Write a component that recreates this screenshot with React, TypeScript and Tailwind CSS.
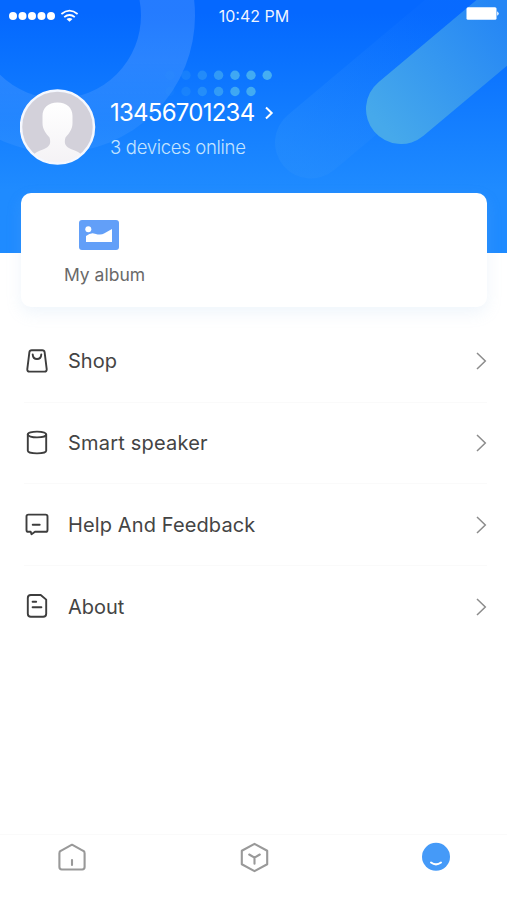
import type { ReactNode } from "react";

const menuItems = [
  { name: "Shop", icon: <ShopIcon />, tracking: "tracking-[0px]" },
  { name: "Smart speaker", icon: <SpeakerIcon />, tracking: "tracking-[0.2px]" },
  { name: "Help And Feedback", icon: <FeedbackIcon />, tracking: "tracking-[0.12px]" },
  { name: "About", icon: <AboutIcon />, tracking: "tracking-[0px]" },
];

const dots = [
  { x: 170, opacity: 0.06 },
  { x: 186, opacity: 0.2 },
  { x: 202.3, opacity: 0.4 },
  { x: 218.6, opacity: 0.65 },
  { x: 235, opacity: 0.9 },
  { x: 251, opacity: 0.95 },
  { x: 267.2, opacity: 1 },
];

function MenuSvg({ children }: { children: ReactNode }) {
  return (
    <svg
      className="w-[26px] h-[26px] shrink-0"
      viewBox="0 0 26 26"
      fill="none"
      stroke="#3d3d3d"
      strokeWidth="1.9"
      strokeLinecap="round"
      strokeLinejoin="round"
    >
      {children}
    </svg>
  );
}

function ShopIcon() {
  return (
    <MenuSvg>
      <path d="M7.7 2.2h10.6q2 0 2.3 2l2.1 17q.2 2.4-2.2 2.4h-15q-2.4 0-2.200-2.400l2.100-17q.3-2 2.300-2Z" />
      <path d="M8.7 6.400c.4 6.200 8.200 6.200 8.600 0" />
    </MenuSvg>
  );
}

function SpeakerIcon() {
  return (
    <MenuSvg>
      <path d="M3.8 4.500v16.300c0 1.500 4.200 2.600 9.200 2.600s9.200-1.100 9.200-2.600V4.500" />
      <ellipse cx="13" cy="4.500" rx="9.200" ry="2.900" />
    </MenuSvg>
  );
}

function FeedbackIcon() {
  return (
    <MenuSvg>
      <path d="M4.400 2.600h17.200q1.900 0 1.900 1.900v13.400q0 1.900-1.900 1.900H11l-3.500 2.500-.8-2.500H4.400q-1.900 0-1.900-1.900V4.500q0-1.900 1.900-1.900Z" />
      <path d="M8.700 12.800h7" />
    </MenuSvg>
  );
}

function AboutIcon() {
  return (
    <MenuSvg>
      <path d="M6.800.95h9.900l5.500 4.700v14.100q0 3-3 3H6.800q-3 0-3-3V3.950q0-3 3-3Z" />
      <path d="M8.600 7.800h3.600M8.600 13.200h8.800" />
    </MenuSvg>
  );
}

function HeaderPattern() {
  return (
    <svg className="absolute inset-0 w-full h-full" viewBox="0 0 507 253" fill="none">
      <defs>
        <linearGradient id="pill" gradientUnits="userSpaceOnUse" x1="385" y1="130" x2="507" y2="20">
          <stop stopColor="#46a9eb" />
          <stop offset="1" stopColor="#2586f5" />
        </linearGradient>
        <linearGradient id="pillFaint" gradientUnits="userSpaceOnUse" x1="300" y1="160" x2="440" y2="35">
          <stop stopColor="#2b90fc" stopOpacity="0.4" />
          <stop offset="1" stopColor="#2482ff" stopOpacity="0.08" />
        </linearGradient>
        <linearGradient id="ring" x1="0" y1="0" x2="0" y2="1">
          <stop stopColor="#fff" stopOpacity="0.13" />
          <stop offset="0.7" stopColor="#fff" stopOpacity="0.13" />
          <stop offset="1" stopColor="#fff" stopOpacity="0.06" />
        </linearGradient>
      </defs>
      <circle cx="58" cy="15.5" r="110" stroke="url(#ring)" strokeWidth="54" />
      <path d="M311 142.500 511 -25.300" stroke="url(#pillFaint)" strokeWidth="72" strokeLinecap="round" />
      <path d="M401 109 601 -58.800" stroke="url(#pill)" strokeWidth="70" strokeLinecap="round" />
      {dots.map((dot) => (
        <g key={dot.x} fill="#45aef2" opacity={dot.opacity}>
          <circle cx={dot.x} cy="75.3" r="4.7" />
          {dot.x < 260 && <circle cx={dot.x} cy="91.5" r="4.7" />}
        </g>
      ))}
    </svg>
  );
}

function StatusBar() {
  return (
    <div className="flex h-8 items-center justify-between pl-[9px] pr-[8px]">
      <svg className="w-[72px] h-5" viewBox="0 0 72 20" fill="none">
        <g fill="#fff">
          <circle cx="4" cy="10" r="4" />
          <circle cx="13.5" cy="10" r="4" />
          <circle cx="23" cy="10" r="4" />
          <circle cx="32.5" cy="10" r="4" />
          <circle cx="42" cy="10" r="4" />
          <path d="M60.5 15.800l-3-2.700q3-2.200 6 0Z" />
        </g>
        <path d="M52.400 8q8.100-6.800 16.200 0M55.200 11.100q5.300-4.300 10.600 0" stroke="#fff" strokeWidth="1.8" />
      </svg>
      <span className="text-[16px] leading-5 text-white/95">10:42 PM</span>
      <svg className="w-[72px] h-5" viewBox="0 0 72 20" fill="#fff">
        <rect x="39.5" y="1.3" width="30" height="12.5" rx="1.5" />
        <path d="M70.200 5.200q3 2.300 0 4.600Z" />
      </svg>
    </div>
  );
}

function Avatar() {
  return (
    <svg className="w-[76px] h-[76px] shrink-0" viewBox="0 0 76 76">
      <defs>
        <clipPath id="avatarClip">
          <circle cx="37.5" cy="38" r="36" />
        </clipPath>
        <linearGradient id="person" x1="0" y1="0" x2="0" y2="1">
          <stop stopColor="#fff" />
          <stop offset="1" stopColor="#f4f2f5" />
        </linearGradient>
      </defs>
      <circle cx="37.5" cy="38" r="36" fill="#d3d1da" />
      <path
        clipPath="url(#avatarClip)"
        fill="url(#person)"
        d="M37.5 13.500C28 13.500 22.500 19 22.500 27V34C22.500 40 25.500 44 29.500 48.500C31.500 55 29 58 23 60.500C18 62.500 15 63.500 14 66V76H61V66C60 63.500 57 62.500 52 60.500C46 58 43.500 55 45.500 48.500C49.500 44 52.500 40 52.500 34V27C52.500 19 47 13.500 37.500 13.500Z"
      />
      <circle cx="37.5" cy="38" r="36.5" fill="none" stroke="#f5f8ff" strokeWidth="2.5" />
    </svg>
  );
}

export default function App() {
  return (
    <div className="flex h-[900px] w-[507px] flex-col overflow-hidden bg-white font-['Inter','Liberation_Sans',sans-serif]">
      {/* Header */}
      <header className="relative h-[253px] shrink-0 bg-linear-to-b from-[#0568ff] from-5% to-[#1f8bff] to-75%">
        <HeaderPattern />
        <div className="relative">
          <StatusBar />
          <div className="flex items-center gap-[14px] pl-[20px] pt-[57px]">
            <Avatar />
            <div className="pt-[3px]">
              <div className="flex items-center gap-[10px] text-white">
                <span className="text-[24px] leading-[30px] tracking-[-0.75px]">13456701234</span>
                <svg className="w-[10px] h-[14px]" viewBox="0 0 10 14" fill="none" stroke="currentColor" strokeWidth="2">
                  <path d="M2 1.500 7.700 7 2 12.500" />
                </svg>
              </div>
              <p className="mt-[7px] text-[18.5px] leading-[24px] tracking-[-0.3px] font-light text-[#c4e4ff]">3 devices online</p>
            </div>
          </div>
        </div>
      </header>

      {/* Album card */}
      <section className="relative -mt-[60px] ml-[21px] mr-[20px] h-[114px] shrink-0 rounded-[10px] bg-white pt-[27px] pl-[43px] shadow-[0_6px_16px_rgba(150,190,225,0.15)]">
        <div className="flex w-[81px] flex-col items-center">
          <svg className="ml-[-12px] w-10 h-[30px]" viewBox="0 0 40 30">
            <rect width="40" height="30" rx="3" fill="#629ff8" />
            <circle cx="9.3" cy="9.2" r="3" fill="#fff" />
            <path d="M7 16q5-4 9-2.300 6 1.800 9-.2l8-4.500v13H7Z" fill="#fff" />
          </svg>
          <span className="mt-[13px] whitespace-nowrap text-[17.5px] leading-6 text-[#696969]">My album</span>
        </div>
      </section>

      {/* Menu */}
      <nav className="mt-[14px] flex-1 pl-[24px] pr-[20px]">
        {menuItems.map((item, i) => (
          <div
            key={item.name}
            className={`flex h-[81.7px] items-center border-[#fafafa] ${i < 3 ? "border-b" : ""}`}
          >
            {item.icon}
            <span className={`ml-[18px] flex-1 text-[20px] text-[#444] ${item.tracking}`}>{item.name}</span>
            <svg className="w-3 h-[18px]" viewBox="0 0 12 18" fill="none" stroke="#8c8c8c" strokeWidth="1.5">
              <path d="M2 1 10.300 9 2 17" />
            </svg>
          </div>
        ))}
      </nav>

      {/* Tab bar */}
      <footer className="flex h-[66px] shrink-0 items-start justify-between border-t border-[#fafafa] pl-[57px] pr-[56px] pt-[7px]">
        <svg className="w-[30px] h-[32px]" viewBox="0 0 30 32" fill="none" stroke="#999" strokeWidth="2.1" strokeLinejoin="round" strokeLinecap="round">
          <path d="M15 2.700 3.800 8.800q-1.400.7-1.400 2.400v13.900q0 2.400 2.400 2.400h20.400q2.400 0 2.400-2.400V11.200q0-1.700-1.400-2.400Z" />
          <path d="M15 18v5" />
        </svg>
        <svg className="w-[30px] h-[32px]" viewBox="0 0 30 32" fill="none" stroke="#999" strokeWidth="2.1" strokeLinejoin="round" strokeLinecap="round">
          <path d="M15.500 1.900 2.800 8.700v13.600l12.700 6.800 12.700-6.800V8.700Z" />
          <path d="m10.200 12.500 5.300 3.200 5.300-3.200M15.500 15.700v6" />
        </svg>
        <svg className="w-[30px] h-[32px]" viewBox="0 0 30 32" fill="none">
          <circle cx="15" cy="14.8" r="14" fill="#459af8" />
          <path d="M10 20.500q5 3.800 10 0" stroke="#fff" strokeWidth="2" strokeLinecap="round" />
        </svg>
      </footer>
    </div>
  );
}
